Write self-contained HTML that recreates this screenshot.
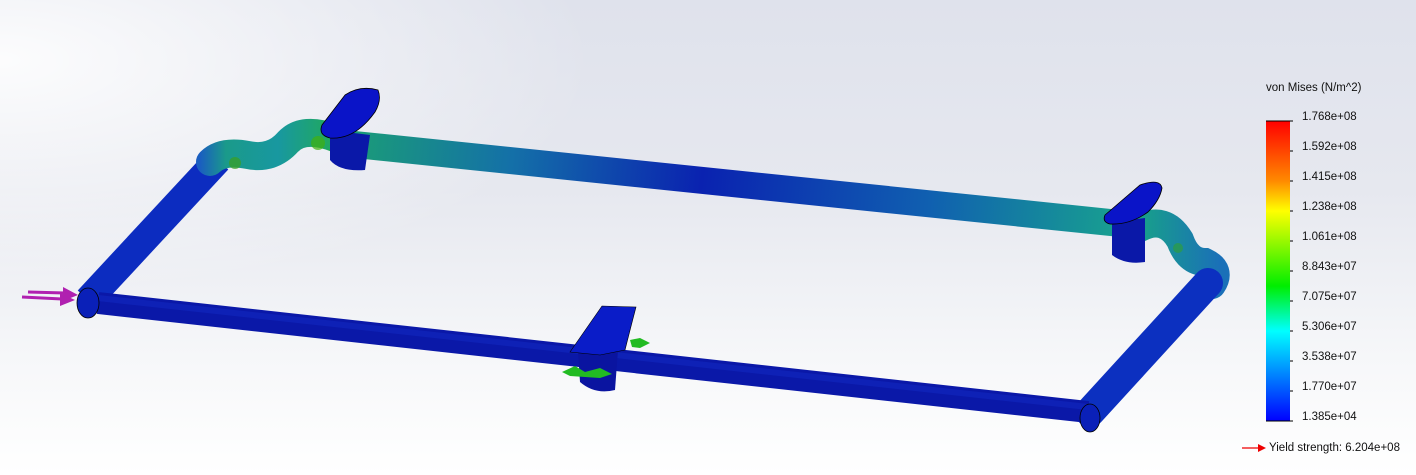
<!DOCTYPE html>
<html><head><meta charset="utf-8"><style>
html,body{margin:0;padding:0;}
body{width:1416px;height:475px;overflow:hidden;position:relative;font-family:"Liberation Sans",sans-serif;
background:linear-gradient(180deg,#dfe2ec 0%,#e6e8ef 40%,#f6f7f9 75%,#ffffff 100%);}
.lbl{position:absolute;left:1302px;font-size:11.5px;color:#111;line-height:14px;}
</style></head><body>
<div style="position:absolute;left:0;top:0;width:600px;height:300px;background:radial-gradient(ellipse at 0% 20%,rgba(255,255,255,0.9),rgba(255,255,255,0) 70%);"></div>
<svg width="1416" height="475" style="position:absolute;left:0;top:0">
<defs>
<linearGradient id="back" x1="360" y1="140" x2="1120" y2="225" gradientUnits="userSpaceOnUse">
<stop offset="0" stop-color="#1a9a7a"/><stop offset="0.2" stop-color="#1470a8"/><stop offset="0.45" stop-color="#0a22b0"/><stop offset="0.75" stop-color="#1060b0"/><stop offset="1" stop-color="#18a090"/></linearGradient>
<linearGradient id="wig" x1="200" y1="0" x2="330" y2="0" gradientUnits="userSpaceOnUse">
<stop offset="0" stop-color="#1a5ec0"/><stop offset="0.2" stop-color="#1a9a8a"/><stop offset="0.6" stop-color="#1898a0"/><stop offset="1" stop-color="#20a860"/></linearGradient>
<linearGradient id="wig2" x1="1140" y1="0" x2="1220" y2="0" gradientUnits="userSpaceOnUse">
<stop offset="0" stop-color="#18a08a"/><stop offset="1" stop-color="#1a70b8"/></linearGradient>
<linearGradient id="leg" x1="0" y1="0" x2="0" y2="1">
<stop offset="0" stop-color="#ff0000"/><stop offset="0.2" stop-color="#ff8a00"/><stop offset="0.3" stop-color="#ffff00"/><stop offset="0.55" stop-color="#00ee00"/><stop offset="0.7" stop-color="#00ffff"/><stop offset="0.85" stop-color="#0080ff"/><stop offset="1" stop-color="#0000ff"/></linearGradient>
</defs>
<!-- back bar -->
<path d="M340 143 L1125 224" stroke="url(#back)" stroke-width="27" fill="none"/>
<!-- left diagonal -->
<path d="M88 300 L218 160" stroke="#0c2cc0" stroke-width="28" fill="none"/>
<!-- left wiggle -->
<path d="M210 162 Q222 150 248 155 Q272 160 288 142 Q303 126 335 138" stroke="url(#wig)" stroke-width="28" fill="none" stroke-linecap="round"/>
<circle cx="235" cy="163" r="6" fill="#3aa020" opacity="0.7"/>
<circle cx="318" cy="143" r="7" fill="#40b010" opacity="0.7"/>
<!-- top-left clamp -->
<path d="M330 130 L330 160 Q340 172 365 170 L370 135 Z" fill="#0a18a8"/>
<path d="M322 125 L345 95 Q360 85 378 90 Q382 100 375 112 Q355 140 330 138 Q318 135 322 125 Z" fill="#0a14c8" stroke="#000" stroke-width="0.8"/>
<!-- right wiggle -->
<path d="M1140 228 Q1165 215 1180 240 Q1188 262 1205 262 Q1222 270 1212 285" stroke="url(#wig2)" stroke-width="28" fill="none" stroke-linecap="round"/>
<circle cx="1178" cy="248" r="5" fill="#30a030" opacity="0.6"/>
<!-- right diagonal -->
<path d="M1090 412 L1208 283" stroke="#0c30c0" stroke-width="30" fill="none" stroke-linecap="round"/>
<!-- right clamp -->
<path d="M1112 222 L1112 255 Q1125 265 1145 262 L1145 218 Z" fill="#0a18a8"/>
<path d="M1105 215 L1140 185 Q1160 178 1162 188 Q1160 200 1148 212 Q1130 225 1110 224 Q1102 222 1105 215 Z" fill="#0a14c8" stroke="#000" stroke-width="0.8"/>
<!-- front bar -->
<path d="M98 303 L1088 412" stroke="#0a18a8" stroke-width="22" fill="none"/>
<path d="M98 298 L1088 407" stroke="#1028c0" stroke-width="6" fill="none" opacity="0.6"/>
<!-- end caps -->
<ellipse cx="88" cy="303" rx="11" ry="15" fill="#0a20b8" stroke="#000" stroke-width="0.8"/>
<ellipse cx="1090" cy="418" rx="10" ry="14" fill="#0a20b8" stroke="#000" stroke-width="0.8"/>
<!-- middle clamp -->
<path d="M578 352 L580 382 Q595 395 615 390 L618 350 Z" fill="#0a14a0"/>
<path d="M570 352 L602 306 L636 307 Q630 330 625 350 L600 355 Z" fill="#0a1cc8" stroke="#000" stroke-width="0.6"/>
<path d="M562 372 L575 366 L585 372 L600 368 L612 374 L600 378 L585 377 L570 376 Z" fill="#22bb22"/>
<path d="M630 340 L640 338 L650 343 L640 348 L632 347 Z" fill="#22bb22"/>
<!-- magenta arrows -->
<g stroke="#b020b0" stroke-width="3" fill="#b020b0">
<line x1="28" y1="292" x2="65" y2="293"/><line x1="22" y1="297" x2="62" y2="299"/>
<path d="M63 287 L78 295 L63 301 Z" stroke="none"/><path d="M60 293 L75 300 L60 306 Z" stroke="none"/>
</g>
<!-- legend bar -->
<rect x="1266" y="121" width="24" height="300" fill="url(#leg)"/>
<line x1="1266" y1="121" x2="1293" y2="121" stroke="#000" stroke-width="1"/>
<line x1="1266" y1="421" x2="1293" y2="421" stroke="#000" stroke-width="1"/>
<g stroke="#000" stroke-width="1">
<line x1="1290" y1="151" x2="1293" y2="151"/><line x1="1290" y1="181" x2="1293" y2="181"/><line x1="1290" y1="211" x2="1293" y2="211"/><line x1="1290" y1="241" x2="1293" y2="241"/><line x1="1290" y1="271" x2="1293" y2="271"/><line x1="1290" y1="301" x2="1293" y2="301"/><line x1="1290" y1="331" x2="1293" y2="331"/><line x1="1290" y1="361" x2="1293" y2="361"/><line x1="1290" y1="391" x2="1293" y2="391"/>
</g>
<line x1="1242" y1="448" x2="1260" y2="448" stroke="#e00" stroke-width="1.2"/>
<path d="M1258 444 L1266 448 L1258 452 Z" fill="#e00"/>
</svg>
<div class="lbl" style="left:1266px;top:81px;">von Mises (N/m^2)</div>
<div class="lbl" style="top:110px">1.768e+08</div>
<div class="lbl" style="top:140px">1.592e+08</div>
<div class="lbl" style="top:170px">1.415e+08</div>
<div class="lbl" style="top:200px">1.238e+08</div>
<div class="lbl" style="top:230px">1.061e+08</div>
<div class="lbl" style="top:260px">8.843e+07</div>
<div class="lbl" style="top:290px">7.075e+07</div>
<div class="lbl" style="top:320px">5.306e+07</div>
<div class="lbl" style="top:350px">3.538e+07</div>
<div class="lbl" style="top:380px">1.770e+07</div>
<div class="lbl" style="top:410px">1.385e+04</div>
<div class="lbl" style="left:1269px;top:441px">Yield strength: 6.204e+08</div>
</body></html>
